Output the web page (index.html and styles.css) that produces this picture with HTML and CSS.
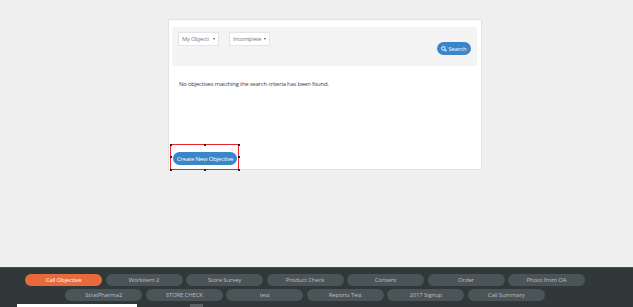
FILE: index.html
```html
<!DOCTYPE html>
<html lang="en">
<head>
    <meta charset="UTF-8">
    <meta name="viewport" content="width=device-width, initial-scale=1.0">
    <title>Call Objective</title>
    <link rel="stylesheet" href="styles.css">
</head>
<body>
    <div class="page">
        <div class="card">
            <div class="filters">
                <div class="selects">
                    <div class="select"><span class="select-text">My Objecti</span><span class="caret"></span></div>
                    <div class="select"><span class="select-text">Incomplete</span><span class="caret"></span></div>
                </div>
                <button class="btn search-btn">
                    <svg width="6" height="6" viewBox="0 0 10 10"><circle cx="4" cy="4" r="3" fill="none" stroke="#fff" stroke-width="1.6"/><line x1="6.2" y1="6.2" x2="9" y2="9" stroke="#fff" stroke-width="1.8"/></svg>
                    Search
                </button>
            </div>
            <p class="empty">No objectives matching the search criteria has been found.</p>
            <div class="create-wrap">
                <div class="selection">
                    <span class="handle h-tl"></span><span class="handle h-tm"></span><span class="handle h-tr"></span>
                    <span class="handle h-ml"></span><span class="handle h-mr"></span>
                    <span class="handle h-bl"></span><span class="handle h-bm"></span><span class="handle h-br"></span>
                </div>
                <button class="btn create-btn">Create New Objective</button>
            </div>
        </div>
    </div>

    <div class="tabbar">
        <div class="tab-row">
            <span class="tab active">Call Objective</span>
            <span class="tab">Workitem 2</span>
            <span class="tab">Store Survey</span>
            <span class="tab">Product Check</span>
            <span class="tab">Content</span>
            <span class="tab">Order</span>
            <span class="tab">Photo from OA</span>
        </div>
        <div class="tab-row">
            <span class="tab">StratPharma2</span>
            <span class="tab">STORE CHECK</span>
            <span class="tab">test</span>
            <span class="tab">Reports Test</span>
            <span class="tab">2017 Signup</span>
            <span class="tab">Call Summary</span>
        </div>
        <div class="peek">
            <span class="peek-white"></span>
            <span class="peek-gray"></span>
        </div>
    </div>
</body>
</html>
```

FILE: styles.css
```css
html, body {
    margin: 0;
    padding: 0;
}
body {
    font-family: "Open Sans", Arial, sans-serif;
    background: #efefef;
    width: 633px;
    height: 307px;
    overflow: hidden;
}
.page {
    height: 267px;
    padding-top: 19px;
    box-sizing: border-box;
}
.card {
    margin-left: 168px;
    width: 314px;
    height: 151px;
    box-sizing: border-box;
    background: #fff;
    border: 1px solid #e2e2e2;
    padding: 7px 4px 0 3px;
}
.filters {
    background: #f4f4f4;
    height: 39px;
    box-sizing: border-box;
    padding: 5px 6px 0 6px;
    display: flex;
    justify-content: space-between;
}
.selects {
    display: flex;
    gap: 10px;
}
.select {
    width: 41px;
    height: 14px;
    box-sizing: border-box;
    background: #fff;
    border: 1px solid #e4e4e4;
    font-size: 5.8px;
    letter-spacing: -0.2px;
    color: #777;
    padding-left: 3px;
    line-height: 12px;
    position: relative;
}
.select-text {
    white-space: nowrap;
}
.caret {
    position: absolute;
    right: 3px;
    top: 5px;
    border-left: 1.5px solid transparent;
    border-right: 1.5px solid transparent;
    border-top: 2px solid #555;
}
.btn {
    font-family: "Open Sans", Arial, sans-serif;
    background: #3b86c8;
    color: #fff;
    border: none;
    border-radius: 7px;
    padding: 0;
    cursor: pointer;
}
.search-btn {
    margin-top: 10px;
    width: 34px;
    height: 13px;
    font-size: 6px;
    letter-spacing: -0.15px;
    display: flex;
    align-items: center;
    justify-content: center;
    gap: 1px;
}
.empty {
    margin: 14px 0 0 7px;
    font-size: 6px;
    letter-spacing: -0.25px;
    color: #444;
    height: 71px;
}
.create-wrap {
    position: relative;
    margin-left: 1px;
    width: 64px;
}
.create-btn {
    width: 64px;
    height: 13px;
    font-size: 6px;
    letter-spacing: -0.2px;
    margin-top: 1px;
    display: block;
}
.selection {
    position: absolute;
    left: -3px;
    top: -8px;
    width: 67px;
    height: 24px;
    border: 1px solid #e8262c;
}
.handle {
    position: absolute;
    width: 2px;
    height: 2px;
    background: #222;
}
.h-tl { left: -1.5px; top: -1.5px; }
.h-tm { left: 33px; top: -1.5px; }
.h-tr { right: -1.5px; top: -1.5px; }
.h-ml { left: -1.5px; top: 11px; }
.h-mr { right: -1.5px; top: 11px; }
.h-bl { left: -1.5px; bottom: -1.5px; }
.h-bm { left: 33px; bottom: -1.5px; }
.h-br { right: -1.5px; bottom: -1.5px; }
.tabbar {
    height: 40px;
    background: #30383a;
    border-top: 1px solid #4a5153;
    box-sizing: border-box;
    padding-top: 6px;
    padding-right: 23px;
    position: relative;
}
.tab-row {
    display: flex;
    justify-content: center;
    gap: 3.5px;
    margin-bottom: 3px;
}
.tab {
    width: 77px;
    height: 12px;
    border-radius: 6px;
    background: #4b5456;
    color: #b9bfc0;
    font-size: 6px;
    letter-spacing: -0.15px;
    line-height: 12px;
    text-align: center;
    white-space: nowrap;
}
.tab.active {
    background: #e8693a;
    color: #fff;
}
.peek {
    position: absolute;
    left: 0;
    bottom: 0;
    width: 100%;
    height: 3px;
}
.peek-white {
    position: absolute;
    left: 17px;
    bottom: 0;
    width: 120px;
    height: 3px;
    background: #fff;
}
.peek-gray {
    position: absolute;
    left: 190px;
    bottom: 0;
    width: 13px;
    height: 3px;
    background: #5a6163;
}
```
